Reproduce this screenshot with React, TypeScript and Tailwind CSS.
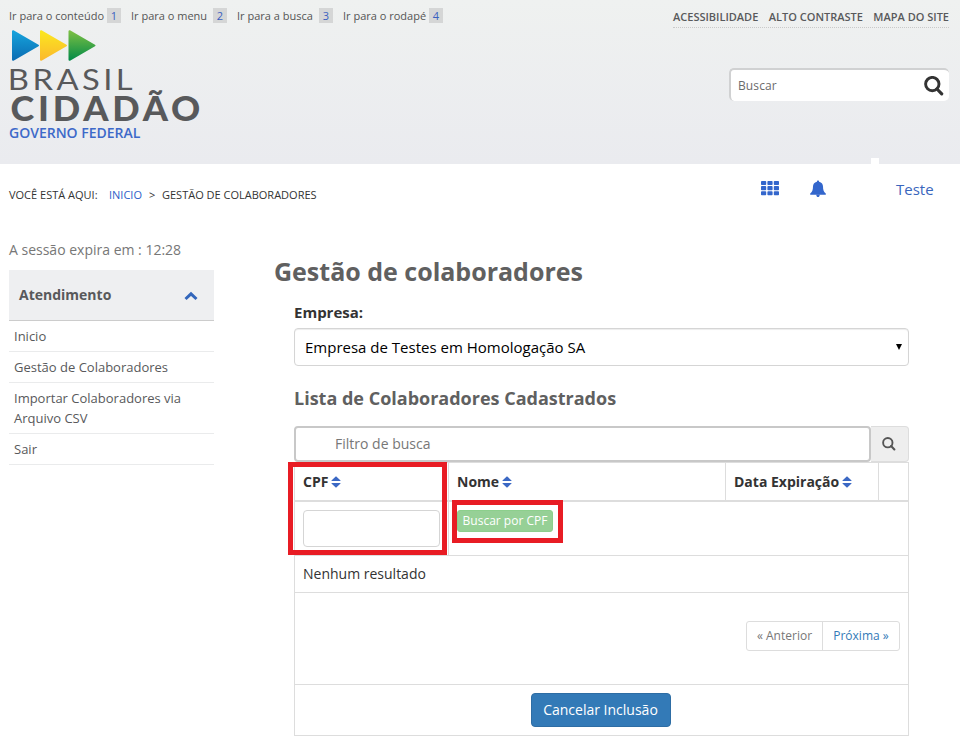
import React from "react";

const skipLinks = [
  { label: "Ir para o conteúdo", n: "1", box: "w-[122px]", text: "w-[98px]" },
  { label: "Ir para o menu", n: "2", box: "w-[106px]", text: "w-[82px]" },
  { label: "Ir para a busca", n: "3", box: "w-[106px]", text: "w-[82px]" },
  { label: "Ir para o rodapé", n: "4", box: "w-[106px]", text: "w-[86px]" },
];

function Magnifier({ className, weight }: { className: string; weight: number }) {
  return (
    <svg className={className} viewBox="0 0 20 20" fill="none" stroke="currentColor" strokeWidth={weight}>
      <circle cx="8.3" cy="8.1" r="6.7" />
      <path d="M13 13l4.700 4.800" strokeLinecap="round" strokeWidth={weight + 0.3} />
    </svg>
  );
}

function SortIcon() {
  return (
    <svg className="ml-[3px] h-3 w-[10px] shrink-0" viewBox="0 0 10 12" fill="#3b68c4">
      <path d="M5 .3L9.500 4.400V5h-9v-.6z" />
      <path d="M5 11.700L9.500 7.600V7h-9v.6z" />
    </svg>
  );
}

function Logo() {
  return (
    <svg className="block h-[94px] w-[200px] overflow-visible" viewBox="8 29 200 94">
      <defs>
        <linearGradient id="blue" x1="0" y1="0" x2="0" y2="1">
          <stop offset="0" stopColor="#16a3dc" />
          <stop offset="1" stopColor="#0b6db3" />
        </linearGradient>
        <linearGradient id="yellow" x1="0" y1="0" x2="0" y2="1">
          <stop offset="0" stopColor="#fbe720" />
          <stop offset="1" stopColor="#fbb92c" />
        </linearGradient>
        <linearGradient id="green" x1="0" y1="0" x2="0" y2="1">
          <stop offset="0" stopColor="#7bbf43" />
          <stop offset="1" stopColor="#058c48" />
        </linearGradient>
      </defs>
      <g strokeLinejoin="round" strokeWidth="2">
        <path d="M13 31.200v28.600L38 45.500z" fill="url(#blue)" stroke="url(#blue)" />
        <path d="M41 31.200v28.600L66 45.500z" fill="url(#yellow)" stroke="url(#yellow)" />
        <path d="M69.500 31.200v28.600L94.500 45.500z" fill="url(#green)" stroke="url(#green)" />
      </g>
      <g fill="#58595b" fontFamily="Lato, 'Open Sans', sans-serif">
        <text transform="translate(7.800 89.600) scale(1.110 1)" fontSize="29.500" fontWeight="400" textLength="112.500" lengthAdjust="spacing">BRASIL</text>
        <text transform="translate(10.500 120.500) scale(1.060 1)" fontSize="34" fontWeight="900" textLength="179" lengthAdjust="spacing">CIDADÃO</text>
      </g>
    </svg>
  );
}

function Header() {
  return (
    <header className="relative flex h-[164px] justify-between bg-linear-to-b from-[#eff1f0] to-[#eaebef]">
      <div className="flex flex-col pl-[9px]">
        <nav className="flex h-[29px] pt-2 text-[11px] leading-[15px] text-[#555]">
          {skipLinks.map((l) => (
            <a key={l.n} className={`flex whitespace-nowrap ${l.box}`}>
              <span className={l.text}>{l.label}</span>
              <span className="h-[15px] w-[14px] bg-[#d5d6d6] text-center text-[#3a5fc0]">{l.n}</span>
            </a>
          ))}
        </nav>
        <div className="-ml-px">
          <Logo />
        </div>
        <div className="text-[14px] leading-5 font-semibold text-[#3d69c9]">GOVERNO FEDERAL</div>
      </div>
      <div className="flex flex-col items-end pr-[11px]">
        <nav className="flex h-[28px] w-[276px] justify-between border-b border-dotted border-[#c9c9c9] pt-[9px] text-[11px] leading-[15px] font-semibold whitespace-nowrap text-[#58595b]">
          <a>ACESSIBILIDADE</a>
          <a>ALTO CONTRASTE</a>
          <a>MAPA DO SITE</a>
        </nav>
        <div className="mt-10 flex h-[33px] w-[220px] items-center justify-between rounded-[5px] border-t-2 border-l-2 border-[#d0d1d2] bg-white pr-[5px] pl-[7px] text-[12px] tracking-[0.1px] text-[#6b6b6b]">
          <span>Buscar</span>
          <Magnifier className="h-5 w-5 text-[#333]" weight={2.9} />
        </div>
      </div>
      <span className="absolute top-[158px] left-[871px] h-[6px] w-2 bg-white" />
    </header>
  );
}

function TopBar() {
  return (
    <div className="flex h-[76px] justify-between pl-[9px]">
      <div className="flex pt-[22px] text-[11px] leading-[18px] whitespace-nowrap text-[#333]">
        <span className="w-[100px]">VOCÊ ESTÁ AQUI:</span>
        <a className="w-10 text-[#2e5fc9]">INICIO</a>
        <span className="w-[13px]">&gt;</span>
        <span>GESTÃO DE COLABORADORES</span>
      </div>
      <div className="flex w-[199px] pt-4 text-[#3366cc]">
        <svg className="mt-px h-[15px] w-[18px]" viewBox="0 0 18 15" fill="currentColor">
          {[0, 5.1, 10.2].map((y) =>
            [0, 6.4, 12.8].map((x) => <rect key={`${x}-${y}`} x={x} y={y} width="5.2" height="4.1" rx="0.8" />)
          )}
        </svg>
        <svg className="ml-[31px] h-[18px] w-4" viewBox="0 0 16 18" fill="currentColor">
          <path d="M8 .5c.7 0 1.100.5 1.100 1.200C11.800 2.300 13 4.300 13 6.600c0 3.500.8 5.300 2.800 6.900v1.200H.2v-1.200C2.200 11.900 3 10.100 3 6.600c0-2.300 1.200-4.300 3.900-4.900C6.900 1 7.300.5 8 .5z" />
          <path d="M6.200 14.500h3.600C9.600 16.400 9 17 8 17s-1.600-.6-1.800-2.500z" />
        </svg>
        <a className="-mt-px ml-[70px] text-[15px] leading-5 text-[#3a66bd]">Teste</a>
      </div>
    </div>
  );
}

function Sidebar() {
  return (
    <aside className="w-[205px] shrink-0 text-[13px] leading-5 text-[#58595b]">
      <div className="h-[30px] text-[14px] leading-5 text-[#777]">A sessão expira em : 12:28</div>
      <div className="flex h-[51px] items-center justify-between border-b border-[#ccc] bg-[#eeeff1] pr-4 pl-[10px] text-[14px] font-bold">
        Atendimento
        <svg className="mt-[2px] h-[10px] w-[14px]" viewBox="0 0 14 10" fill="none" stroke="#3366bb" strokeWidth="3">
          <path d="M1.500 8L7 2.800 12.500 8" />
        </svg>
      </div>
      <ul>
        <li className="border-b border-[#eaebec] px-[5px] py-[5px]">Inicio</li>
        <li className="border-b border-[#eaebec] px-[5px] py-[5px]">Gestão de Colaboradores</li>
        <li className="border-b border-[#eaebec] px-[5px] py-[5px]">Importar Colaboradores via Arquivo CSV</li>
        <li className="border-b border-[#eaebec] px-[5px] py-[5px]">Sair</li>
      </ul>
    </aside>
  );
}

function ColaboradoresTable() {
  return (
    <div className="relative h-[274px] border border-[#ddd] text-[14px] text-[#333]">
      <div className="flex h-[39px] border-b-2 border-[#ddd] font-bold">
        <div className="flex w-[154px] items-center border-r border-[#ddd] pl-2">CPF<SortIcon /></div>
        <div className="flex w-[277px] items-center border-r border-[#ddd] pl-2">Nome<SortIcon /></div>
        <div className="flex w-[153px] items-center border-r border-[#ddd] pl-2">Data Expiração<SortIcon /></div>
      </div>
      <div className="flex h-[54px] border-b border-[#ddd]">
        <div className="w-[154px] border-r border-[#ddd] pt-2 pl-2">
          <div className="h-[37px] w-[137px] rounded-[4px] border border-[#d5d5d5] bg-white" />
        </div>
        <div className="pt-2 pl-2">
          <button className="block h-[22px] w-[96px] rounded-[3px] border border-[#8ccf8c] bg-[#96d096] text-center text-[12px] leading-5 font-medium whitespace-nowrap text-white">
            Buscar por CPF
          </button>
        </div>
      </div>
      <div className="h-[37px] border-b border-[#ddd] pl-2 leading-9">Nenhum resultado</div>
      <div className="flex h-[92px] justify-end border-b border-[#ddd] pt-7 pr-2">
        <div className="flex h-[30px] rounded-[3px] border border-[#ddd] text-[12px] leading-7 whitespace-nowrap">
          <span className="w-[76px] border-r border-[#ddd] text-center text-[#777]">« Anterior</span>
          <a className="w-[76px] text-center text-[#337ab7]">Próxima »</a>
        </div>
      </div>
      <div className="flex justify-center pt-2 pr-[2px]">
        <button className="h-[34px] w-[140px] rounded-[4px] border border-[#2e6da4] bg-[#337ab7] text-center text-[14px] leading-8 whitespace-nowrap text-white">
          Cancelar Inclusão
        </button>
      </div>
      <div className="absolute -top-px -left-[7px] h-[93px] w-[159px] border-[5px] border-[#e81c24]" />
      <div className="absolute top-[37px] left-[157px] h-[43px] w-[111px] border-[5px] border-[#e81c24]" />
    </div>
  );
}

export default function App() {
  return (
    <div className="h-[739px] w-[960px] overflow-hidden bg-white font-['Open_Sans','Noto_Sans',sans-serif]">
      <Header />
      <TopBar />
      <div className="flex pl-[9px]">
        <Sidebar />
        <main className="ml-[60px] w-[635px]">
          <h1 className="mt-[15px] h-[46px] text-[25px] leading-8 font-bold text-[#606060]">Gestão de colaboradores</h1>
          <div className="pl-5">
            <label className="block h-[27px] text-[15px] leading-[22px] font-bold text-[#333]">Empresa:</label>
            <div className="flex h-[38px] items-center justify-between rounded-[4px] border border-[#d5d5d5] pr-[6px] pl-[10px] text-[15px] text-black shadow-[inset_0_1px_1px_rgba(0,0,0,0.075)]">
              <span>Empresa de Testes em Homologação SA</span>
              <svg className="h-[6px] w-[6px]" viewBox="0 0 6 6"><path d="M0 0h6L3 6z" /></svg>
            </div>
            <h2 className="mt-5 h-10 text-[18px] leading-6 font-bold text-[#606060]">Lista de Colaboradores Cadastrados</h2>
            <div className="flex h-9">
              <div className="w-[577px] rounded-[4px] border-2 border-[#c8c8c8] pl-[39px] text-[14px] leading-8 text-[#777]">Filtro de busca</div>
              <div className="flex flex-1 items-center justify-center rounded-r-[4px] border border-l-0 border-[#ddd] bg-[#eee] pr-px">
                <Magnifier className="h-[14px] w-[14px] text-[#555]" weight={2.7} />
              </div>
            </div>
            <ColaboradoresTable />
          </div>
        </main>
      </div>
    </div>
  );
}
